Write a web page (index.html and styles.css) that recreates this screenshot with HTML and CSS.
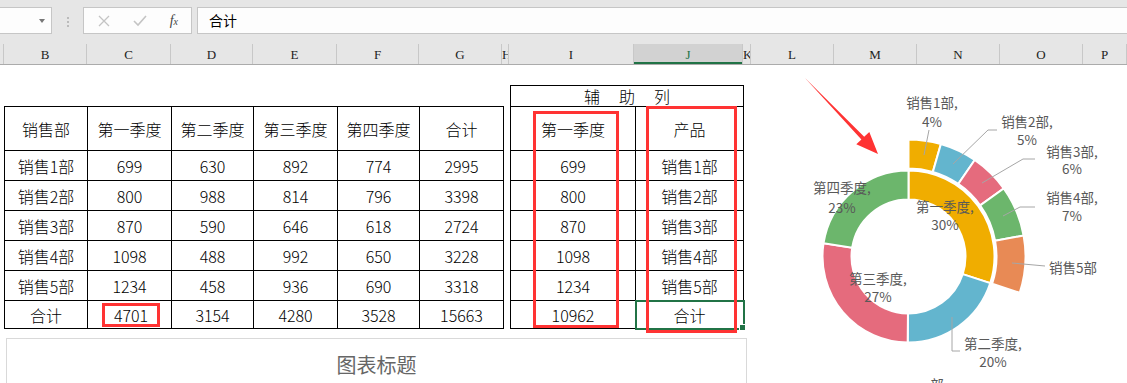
FILE: index.html
```html
<!DOCTYPE html>
<html>
<head>
<meta charset="utf-8">
<title>销售部 季度汇总</title>
<link rel="stylesheet" href="styles.css">
</head>
<body>

<div class="bar">
  <div class="namebox"><span class="caret"></span></div>
  <div class="grip"><i></i><i></i><i></i></div>
  <div class="btns">
    <svg width="12" height="12" viewBox="0 0 12 12"><path d="M1 1 L11 11 M11 1 L1 11" stroke="#c4c4c4" stroke-width="1.3" fill="none"/></svg>
    <svg width="14" height="12" viewBox="0 0 14 12"><path d="M1 6 L5 10 L13 1" stroke="#c4c4c4" stroke-width="1.6" fill="none"/></svg>
    <span class="fx">f<small>x</small></span>
  </div>
  <div class="input">合计</div>
</div>

<div class="heads">
  <div></div><div>B</div><div>C</div><div>D</div><div>E</div><div>F</div><div>G</div><div>H</div><div>I</div><div class="sel">J</div><div>K</div><div>L</div><div>M</div><div>N</div><div>O</div><div>P</div>
</div>

<div class="sheet">
  <div class="tables">
    <table class="data">
      <colgroup><col class="w83"><col class="w84"><col class="w82"><col class="w84"><col class="w82"><col class="w84"></colgroup>
      <tr class="hd"><td>销售部</td><td>第一季度</td><td>第二季度</td><td>第三季度</td><td>第四季度</td><td>合计</td></tr>
      <tr><td>销售1部</td><td>699</td><td>630</td><td>892</td><td>774</td><td>2995</td></tr>
      <tr><td>销售2部</td><td>800</td><td>988</td><td>814</td><td>796</td><td>3398</td></tr>
      <tr><td>销售3部</td><td>870</td><td>590</td><td>646</td><td>618</td><td>2724</td></tr>
      <tr><td>销售4部</td><td>1098</td><td>488</td><td>992</td><td>650</td><td>3228</td></tr>
      <tr><td>销售5部</td><td>1234</td><td>458</td><td>936</td><td>690</td><td>3318</td></tr>
      <tr class="tot"><td>合计</td><td><span class="mark">4701</span></td><td>3154</td><td>4280</td><td>3528</td><td>15663</td></tr>
    </table>

    <div class="aux">
      <table class="data">
        <colgroup><col class="w125"><col class="w109"></colgroup>
        <tr class="cap"><td colspan="2"><span class="spread">辅助列</span></td></tr>
        <tr class="hd"><td>第一季度</td><td>产品</td></tr>
        <tr><td>699</td><td>销售1部</td></tr>
        <tr><td>800</td><td>销售2部</td></tr>
        <tr><td>870</td><td>销售3部</td></tr>
        <tr><td>1098</td><td>销售4部</td></tr>
        <tr><td>1234</td><td>销售5部</td></tr>
        <tr class="tot"><td>10962</td><td class="active">合计</td></tr>
      </table>
      <div class="redbox rb-qtr"></div>
      <div class="redbox rb-prod"></div>
    </div>
  </div>

  <div class="chart-title">图表标题</div>

  <svg class="donut" width="347" height="318" viewBox="780 65 347 318">
    <!-- arrow -->
    <polygon class="arrow" points="805,78 864.2,136.7 869.3,131.9 878,154 856.3,144.3 861.4,139.5"/>

    <!-- inner ring: quarters -->
    <g class="seg">
      <path fill="#f0ad00" d="M908.5 170.5 A86 86 0 0 1 990.26 283.16 L962.69 274.17 A57 57 0 0 0 908.5 199.5 Z"/>
      <path fill="#63b5ce" d="M990.26 283.16 A86 86 0 0 1 907.69 342.5 L907.96 313.5 A57 57 0 0 0 962.69 274.17 Z"/>
      <path fill="#e56b7d" d="M907.69 342.5 A86 86 0 0 1 823.54 243.18 L852.19 247.67 A57 57 0 0 0 907.96 313.5 Z"/>
      <path fill="#6cb66c" d="M823.54 243.18 A86 86 0 0 1 908.5 170.5 L908.5 199.5 A57 57 0 0 0 852.19 247.67 Z"/>
    </g>

    <!-- outer ring: departments in Q1 -->
    <g class="seg">
      <path fill="#f0ad00" d="M908.5 139.5 A117 117 0 0 1 940.89 144.07 L932.86 171.94 A88 88 0 0 0 908.5 168.5 Z"/>
      <path fill="#63b5ce" d="M940.89 144.07 A117 117 0 0 1 974.70 160.03 L958.29 183.94 A88 88 0 0 0 932.86 171.94 Z"/>
      <path fill="#e56b7d" d="M974.70 160.03 A117 117 0 0 1 1003.71 188.51 L980.11 205.36 A88 88 0 0 0 958.29 183.94 Z"/>
      <path fill="#6cb66c" d="M1003.71 188.51 A117 117 0 0 1 1023.62 235.58 L995.08 240.77 A88 88 0 0 0 980.11 205.36 Z"/>
      <path fill="#e88a55" d="M1023.62 235.58 A117 117 0 0 1 1019.73 292.77 L992.16 283.78 A88 88 0 0 0 995.08 240.77 Z"/>
    </g>

    <!-- leader lines -->
    <g class="leader">
      <polyline points="924,155 929,130"/>
      <polyline points="997,130 988,130 953,164"/>
      <polyline points="1035,159 1023,159 982,183"/>
      <polyline points="1035,207 1020,207 1003,216"/>
      <polyline points="1045,266 1012,263"/>
      <polyline points="952,317 952,351 960,351"/>
    </g>

    <!-- labels -->
    <g class="lbl">
      <text x="932" y="108">销售1部,</text><text x="932" y="127">4%</text>
      <text x="1027" y="127">销售2部,</text><text x="1027" y="145">5%</text>
      <text x="1072" y="157">销售3部,</text><text x="1072" y="174">6%</text>
      <text x="1072" y="203">销售4部,</text><text x="1072" y="221">7%</text>
      <text x="1049" y="273" class="start">销售5部</text>
      <text x="842" y="193">第四季度,</text><text x="842" y="213">23%</text>
      <text x="945" y="212">第一季度,</text><text x="945" y="230">30%</text>
      <text x="878" y="284">第三季度,</text><text x="878" y="302">27%</text>
      <text x="993" y="349">第二季度,</text><text x="993" y="367">20%</text>
      <text x="937" y="390">部</text>
    </g>
  </svg>
</div>

</body>
</html>
```

FILE: styles.css
```css
html, body {margin: 0; padding: 0;}
body {width: 1127px; height: 383px; overflow: hidden; background: #fff; font-family: "Noto Sans CJK SC", "Liberation Sans", sans-serif;}

/* formula bar */
.bar {display: flex; align-items: flex-start; height: 44px; box-sizing: border-box; padding-top: 7px; background: #e6e6e6;}
.namebox {position: relative; width: 52px; height: 27px; box-sizing: border-box; background: #fdfdfd; border: 1px solid #c6c6c6; border-left: none;}
.caret {position: absolute; left: 39px; top: 11px; border-left: 3px solid transparent; border-right: 3px solid transparent; border-top: 4px solid #777;}
.grip {display: flex; flex-direction: column; gap: 2px; width: 31px; padding-top: 10px; align-items: center;}
.grip i {display: block; width: 2px; height: 2px; background: #bbb;}
.btns {display: flex; align-items: center; justify-content: space-between; width: 109px; height: 27px; box-sizing: border-box; padding: 0 13px 0 14px; background: #fdfdfd; border: 1px solid #c6c6c6;}
.fx {font-family: "Liberation Serif", serif; font-style: italic; font-size: 14px; color: #444;}
.fx small {font-size: 10px;}
.input {flex: 1; margin-left: 5px; height: 27px; box-sizing: border-box; padding-left: 11px; line-height: 25px; font-size: 14px; color: #000; background: #fdfdfd; border: 1px solid #c6c6c6; border-right: none;}

/* column headers */
.heads {display: grid; grid-template-columns: 4px 83px 84px 82px 84px 82px 83px 7px 125px 109px 8px 83px 83px 83px 83px 1fr; height: 20px; background: #e6e6e6; border-bottom: 1px solid #ababab;}
.heads div {border-right: 1px solid #c8c8c8; font-family: "Liberation Serif", serif; font-size: 13px; line-height: 20px; padding-top: 1px; text-align: center; color: #222; overflow: hidden;}
.heads div.sel {background: #d2d2d2; color: #217346; box-shadow: inset 0 -2px 0 #217346;}

/* sheet */
.sheet {position: relative; height: 318px; overflow: hidden;}
.tables {display: flex; align-items: flex-end; padding-left: 4px; gap: 6px; margin-top: 20px;}

table.data {border-collapse: collapse; table-layout: fixed; font-size: 16px; font-weight: 300; color: #000;}
table.data td {border: 1px solid #000; padding: 0; text-align: center; height: 29px; line-height: 20px;}
table.data tr.hd td {height: 43px;}
table.data tr.tot td {height: 27px;}
table.data tr.cap td {height: 20px;}
.w82 {width: 82px;} .w83 {width: 83px;} .w84 {width: 84px;}
.w125 {width: 125px;} .w109 {width: 108px;}

.spread {letter-spacing: 19px; padding-left: 19px;}
.mark {display: inline-block; width: 52px; line-height: 18px; border: 3px solid #f33; margin-left: 3px;}

.aux {position: relative;}
.active {position: relative; outline: 2px solid #217346; outline-offset: -1px;}
.active::after {content: ""; position: absolute; right: -3px; bottom: -3px; width: 5px; height: 5px; background: #217346; border: 1px solid #fff;}
.redbox {position: absolute; border: 3px solid #f33; box-sizing: border-box;}
.rb-qtr {left: 23px; top: 26px; width: 86px; height: 217px;}
.rb-prod {left: 136px; top: 21px; width: 91px; height: 227px;}

.chart-title {margin: 9px 0 0 6px; width: 741px; height: 60px; box-sizing: border-box; border: 1px solid #d9d9d9; padding-top: 13px; text-align: center; font-size: 20px; line-height: 26px; color: #666;}

/* donut chart */
.donut {position: absolute; left: 780px; top: 0;}
.arrow {fill: #f33;}
.seg path {stroke: #fff; stroke-width: 2;}
.leader polyline {fill: none; stroke: #a6a6a6; stroke-width: 1;}
.lbl text {font-family: "Noto Sans CJK SC", sans-serif; font-size: 13.5px; fill: #595959; text-anchor: middle;}
.lbl text.start {text-anchor: start;}
```
